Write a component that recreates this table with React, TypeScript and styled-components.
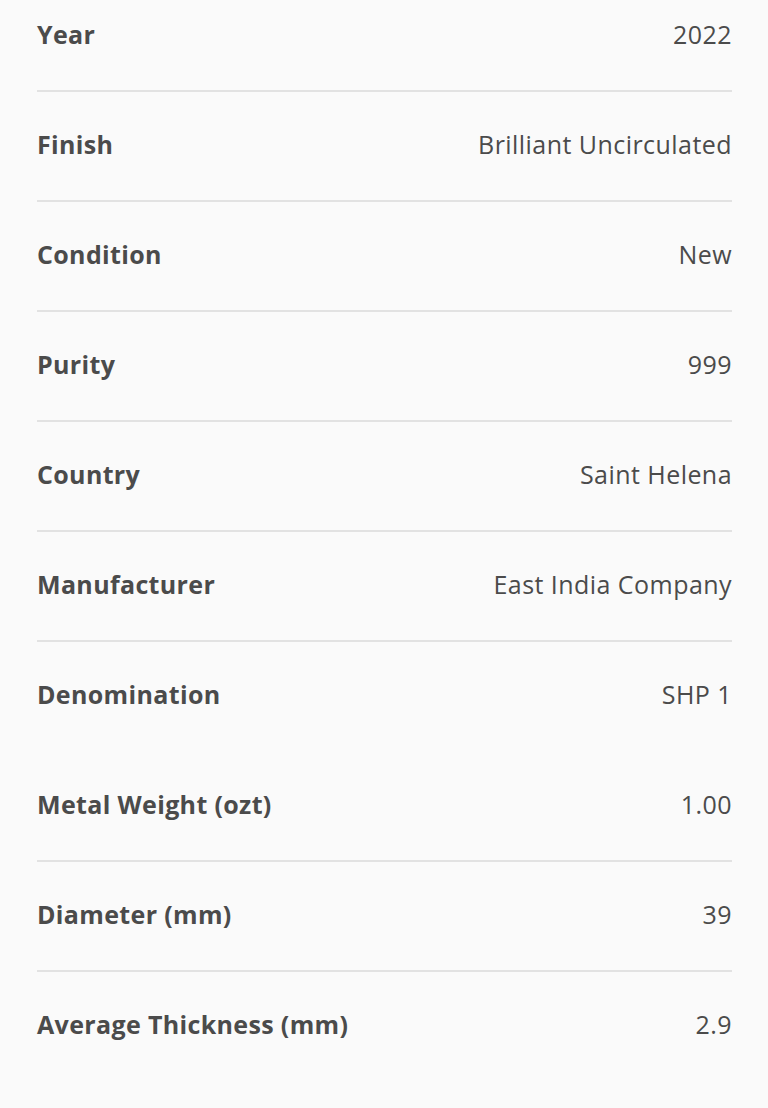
import React from 'react';
import styled, { createGlobalStyle } from 'styled-components';

const text = '#4b4b4b';
const line = '#e2e2e2';

const specs = [
  { label: 'Year', value: '2022' },
  { label: 'Finish', value: 'Brilliant Uncirculated' },
  { label: 'Condition', value: 'New' },
  { label: 'Purity', value: '999' },
  { label: 'Country', value: 'Saint Helena' },
  { label: 'Manufacturer', value: 'East India Company' },
  { label: 'Denomination', value: 'SHP 1', noLine: true },
  { label: 'Metal Weight (ozt)', value: '1.00' },
  { label: 'Diameter (mm)', value: '39' },
  { label: 'Average Thickness (mm)', value: '2.9', noLine: true },
];

export default function App() {
  return (
    <>
      <GlobalStyle />
      <Page>
        <SpecList>
          {specs.map((s) => (
            <SpecRow key={s.label} $noLine={s.noLine}>
              <Label>{s.label}</Label>
              <Value>{s.value}</Value>
            </SpecRow>
          ))}
        </SpecList>
      </Page>
    </>
  );
}

const GlobalStyle = createGlobalStyle`
  html, body {
    margin: 0;
    background: #fafafa;
  }
  body {
    font-family: "Open Sans", Lato, sans-serif;
  }
`;

const Page = styled.main`
  width: 768px;
  height: 1108px;
  overflow: hidden;
  background: #fafafa;
`;

// list is scrolled a little, so the first row is cut at the top
const SpecList = styled.dl`
  margin: -18px 36px 0 37px;
  padding: 0;
`;

const SpecRow = styled.div<{ $noLine?: boolean }>`
  display: flex;
  align-items: center;
  justify-content: space-between;
  box-sizing: border-box;
  height: 110px;
  padding-bottom: 4px;
  border-bottom: 2px solid ${(p) => (p.$noLine ? 'transparent' : line)};
`;

const Label = styled.dt`
  color: ${text};
  font-size: 25px;
  line-height: 1;
  font-weight: 700;
  letter-spacing: 0.35px;
`;

const Value = styled.dd`
  margin: 0;
  color: ${text};
  font-size: 25px;
  line-height: 1;
  font-weight: 400;
  letter-spacing: 0.45px;
`;
